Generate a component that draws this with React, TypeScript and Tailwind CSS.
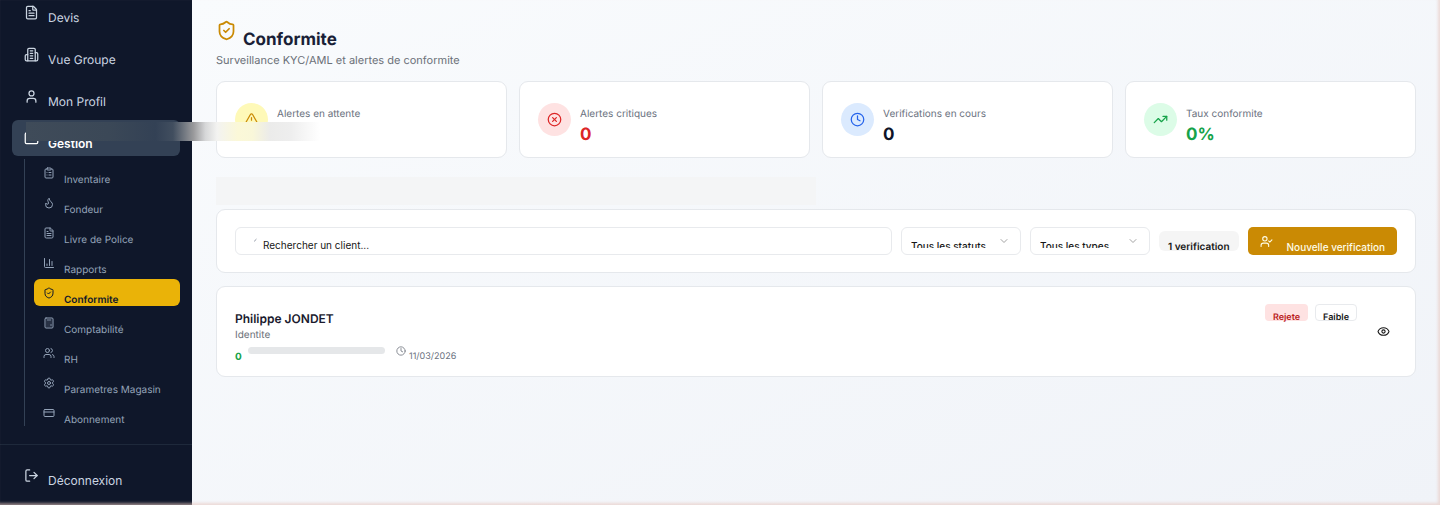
import type { ComponentType, ReactNode } from 'react';
import {
  Calculator,
  ChartColumn,
  ChevronDown,
  CircleX,
  ClipboardList,
  Clock,
  CreditCard,
  Eye,
  FileText,
  Flame,
  Folder,
  LogOut,
  Settings,
  ShieldCheck,
  TrendingUp,
  TriangleAlert,
  User,
  UserCheck,
  Users,
} from 'lucide-react';

type IconType = ComponentType<{ size?: number; className?: string }>;

function Building({ size = 24, className }: { size?: number; className?: string }) {
  return (
    <svg
      width={size}
      height={size}
      viewBox="0 0 24 24"
      fill="none"
      stroke="currentColor"
      strokeWidth="2"
      strokeLinecap="round"
      strokeLinejoin="round"
      className={className}
      aria-hidden="true"
    >
      <path d="M6 22V4a2 2 0 0 1 2-2h8a2 2 0 0 1 2 2v18Z" />
      <path d="M6 12H4a2 2 0 0 0-2 2v6a2 2 0 0 0 2 2h2" />
      <path d="M18 9h2a2 2 0 0 1 2 2v9a2 2 0 0 1-2 2h-2" />
      <path d="M10 6h4M10 10h4M10 14h4M10 18h4" />
    </svg>
  );
}

const mainLinks: { label: string; icon: IconType }[] = [
  { label: 'Devis', icon: FileText },
  { label: 'Vue Groupe', icon: Building },
  { label: 'Mon Profil', icon: User },
];

const subLinks: { label: string; icon: IconType; active?: boolean }[] = [
  { label: 'Inventaire', icon: ClipboardList },
  { label: 'Fondeur', icon: Flame },
  { label: 'Livre de Police', icon: FileText },
  { label: 'Rapports', icon: ChartColumn },
  { label: 'Conformite', icon: ShieldCheck, active: true },
  { label: 'Comptabilité', icon: Calculator },
  { label: 'RH', icon: Users },
  { label: 'Parametres Magasin', icon: Settings },
  { label: 'Abonnement', icon: CreditCard },
];

const stats: { label: string; value: string; icon: IconType; circle: string; color: string }[] = [
  { label: 'Alertes en attente', value: '0', icon: TriangleAlert, circle: 'bg-[#fef9b8] text-[#ca8a04]', color: 'text-[#0f1428]' },
  { label: 'Alertes critiques', value: '0', icon: CircleX, circle: 'bg-[#fee2e2] text-[#dc2626]', color: 'text-[#dc2626]' },
  { label: 'Verifications en cours', value: '0', icon: Clock, circle: 'bg-[#dbeafe] text-[#2563eb]', color: 'text-[#0f1428]' },
  { label: 'Taux conformite', value: '0%', icon: TrendingUp, circle: 'bg-[#dcfce7] text-[#16a34a]', color: 'text-[#16a34a]' },
];

function Card({ children, className }: { children: ReactNode; className: string }) {
  return <section className={`rounded-[9px] border border-[#e5e8ec] bg-white ${className}`}>{children}</section>;
}

function Sidebar() {
  const row = 'flex h-9 w-full items-center gap-[9px] rounded-md px-3 text-xs';
  return (
    <aside className="flex w-48 shrink-0 flex-col overflow-hidden bg-[#0f172a] text-[#cbd5e1]">
      <nav className="-mt-1.5 flex flex-col px-3">
        <div className="flex flex-col gap-1.5">
          {mainLinks.map(({ label, icon: Icon }) => (
            <a key={label} href="#" className={row}>
              <Icon size={15} />
              <span className="pt-3">{label}</span>
            </a>
          ))}
          <button type="button" className={`${row} bg-[#334155] font-semibold text-white`}>
            <Folder size={15} />
            <span className="pt-3">Gestion</span>
          </button>
        </div>
        <div className="mt-[3px] ml-3 flex flex-col gap-[3px] border-l border-[#334155] pl-[9px]">
          {subLinks.map(({ label, icon: Icon, active }) => (
            <a
              key={label}
              href="#"
              className={`flex h-[27px] items-center gap-[9px] rounded-md px-[9px] text-[10px] ${
                active ? 'bg-[#eab308] font-semibold text-[#0f172a]' : 'text-[#94a3b8]'
              }`}
            >
              <Icon size={12} className="shrink-0" />
              <span className="pt-3.5 leading-3 whitespace-nowrap">{label}</span>
            </a>
          ))}
        </div>
      </nav>
      <div className="mt-[18px] border-t border-[#1e293b] px-3 pt-3">
        <button type="button" className={row}>
          <LogOut size={15} />
          <span className="pt-3">Déconnexion</span>
        </button>
      </div>
    </aside>
  );
}

function Filter({ label }: { label: string }) {
  return (
    <div className="relative h-7 w-[120px] rounded-md border border-[#e8eaed]">
      <div className="h-5 overflow-hidden">
        <select
          aria-label={label}
          className="h-9 w-full appearance-none bg-transparent pr-6 pl-[9px] text-[10px] font-medium text-[#171717] outline-none"
        >
          <option>{label}</option>
        </select>
      </div>
      <ChevronDown size={12} className="pointer-events-none absolute top-[7px] right-2.5 text-[#a3a3a3]" />
    </div>
  );
}

export default function App() {
  return (
    <div className="relative flex min-h-screen overflow-hidden font-['Inter',sans-serif] [text-rendering:geometricPrecision]">
      <Sidebar />
      <main className="min-w-0 flex-1 bg-linear-to-br from-[#f9fbfd] to-[#f0f3f8] px-6 pt-[18px]">
        <header>
          <div className="flex h-[34px] items-end gap-1.5">
            <ShieldCheck size={21} className="mb-[11px] text-[#ca8a04]" />
            <h1 className="text-[17px] leading-6 font-bold text-[#1a1f37]">Conformite</h1>
          </div>
          <p className="text-[11px] leading-[17px] text-[#6b7078]">Surveillance KYC/AML et alertes de conformite</p>
        </header>

        <div className="mt-3 grid grid-cols-4 gap-3">
          {stats.map(({ label, value, icon: Icon, circle, color }) => (
            <Card key={label} className="flex items-center gap-[9px] px-[18px] py-2">
              <span className={`grid size-[33px] place-items-center rounded-full ${circle}`}>
                <Icon size={15} />
              </span>
              <div className="pt-4">
                <p className="text-[10px] leading-4 text-[#6b7280]">{label}</p>
                <p className={`text-[17px] leading-[27px] font-bold ${color}`}>{value}</p>
              </div>
            </Card>
          ))}
        </div>

        <div className="mt-[19px] h-7 w-1/2 bg-[#f4f5f6]" />

        <Card className="mt-1 flex items-center gap-[9px] px-[18px] py-[17px]">
          <div className="relative flex-1">
            <input
              type="text"
              aria-label="Rechercher un client"
              placeholder="Rechercher un client..."
              className="block h-7 w-full rounded-md border border-[#e8eaed] bg-white pt-2 pl-[27px] text-[10px] text-[#171717] outline-none placeholder:text-[#171717]"
            />
            <svg className="absolute top-[11px] left-[18px]" width="5" height="5" viewBox="0 0 5 5" aria-hidden="true">
              <path d="M1.5 3.5 Q2 1.8 3.5 1" fill="none" stroke="#9ca3af" strokeWidth="1" />
            </svg>
          </div>
          <Filter label="Tous les statuts" />
          <Filter label="Tous les types" />
          <span className="flex h-5 items-center rounded-md bg-[#f5f5f5] px-[9px] pt-3 text-[10px] font-semibold text-[#171717]">
            1 verification
          </span>
          <button
            type="button"
            className="flex h-7 items-center rounded-[5px] bg-[#ca8a04] px-3 text-[10px] font-medium text-[#fefce8]"
          >
            <UserCheck size={13} className="mr-3.5" />
            <span className="pt-3">Nouvelle verification</span>
          </button>
        </Card>

        <Card className="mt-[13px] flex items-center justify-between px-[18px]">
          <div className="pt-[23px] pb-[12px]">
            <h2 className="text-xs leading-[18px] font-semibold text-[#1a1a2e]">Philippe JONDET</h2>
            <p className="text-[10px] leading-[14px] text-[#6b7078]">Identite</p>
            <div className="flex items-start">
              <span className="mt-2 w-[13px] text-[10px] leading-[14px] font-bold text-[#16a34a]">0</span>
              <div className="mt-[5px] h-[7px] w-[137px] rounded-sm bg-[#e5e7e9]" />
              <Clock size={10} className="mt-1 ml-[11px] text-[#737882]" />
              <span className="mt-2 ml-[3px] text-[9px] leading-[14px] text-[#6b7280]">11/03/2026</span>
            </div>
          </div>
          <div className="flex items-center gap-3 self-stretch">
            <div className="flex gap-[7px] self-start pt-[17px] text-[9px] font-semibold">
              <span className="flex h-[17px] items-center rounded bg-[#fee2e2] px-2 pt-2.5 text-[#b91c1c]">Rejete</span>
              <span className="flex h-[17px] items-center rounded border border-[#e8eaed] px-[7px] pt-2.5 text-[#171717]">
                Faible
              </span>
            </div>
            <button type="button" aria-label="Voir la verification" className="grid size-7 place-items-center text-[#171717]">
              <Eye size={13} />
            </button>
          </div>
        </Card>
      </main>

      <div className="pointer-events-none absolute top-[122px] left-[26px] h-[19px] w-[294px] bg-[linear-gradient(90deg,#3f4b59_0%,#3b4857_28%,#334155_44%,#414e5f_50%,#9a9a9c_57%,#d6d7d8_61%,#f3f3f1_65%,#fbf8d8_72%,#f9f7d9_77%,#ebebea_83%,#eeeeee_90%,#ffffff_100%)]" />
      <div className="pointer-events-none absolute inset-0 shadow-[inset_-2px_-2px_3px_#e8c8c099]" />
    </div>
  );
}
